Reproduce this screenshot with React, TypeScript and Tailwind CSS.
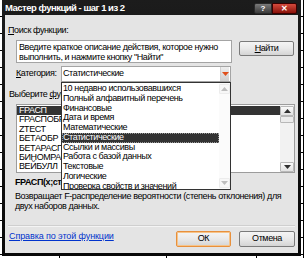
import React from 'react'

const categories = [
  '10 недавно использовавшихся',
  'Полный алфавитный перечень',
  'Финансовые',
  'Дата и время',
  'Математические',
  'Статистические',
  'Ссылки и массивы',
  'Работа с базой данных',
  'Текстовые',
  'Логические',
  'Проверка свойств и значений',
]

const functions = ['FРАСП', 'FРАСПОБР', 'ZТЕСТ', 'БЕТАОБР', 'БЕТАРАСП', 'БИНОМРАСП', 'ВЕЙБУЛЛ']

function Tri({ down, color }: { down?: boolean; color: string }) {
  return (
    <svg width="7" height="4" viewBox="0 0 7 4" className="block">
      <polygon points={down ? '0,0 7,0 3.5,4' : '0,4 7,4 3.5,0'} fill={color} />
    </svg>
  )
}

function Button({ children, focused, className }: { children: React.ReactNode; focused?: boolean; className?: string }) {
  return (
    <div
      className={
        'flex items-center justify-center rounded-[2px] border bg-linear-to-b from-[#f5f5f5] via-[#e9e9e9] to-[#d4d4d4] ' +
        (focused ? 'border-[#e8903c] shadow-[inset_0_0_0_1px_#f6c48a] ' : 'border-[#7a7a7a] ') +
        (className ?? '')
      }
    >
      {children}
    </div>
  )
}

function ScrollBtn({ down, light }: { down?: boolean; light?: boolean }) {
  return (
    <div
      className={
        'flex h-[10px] items-center justify-center rounded-[1px] border ' +
        (light ? 'border-[#ececec] bg-[#f7f7f7]' : 'border-[#b8b8b8] bg-linear-to-b from-[#fafafa] to-[#e2e2e2]')
      }
    >
      <Tri down={down} color={light ? '#bdbdbd' : '#303030'} />
    </div>
  )
}

function Sheet() {
  const cells = Array.from({ length: 64 })
  return (
    <div className="grid grid-cols-[60px_107px_90px_47px] auto-rows-[17px]">
      {cells.map((_, i) => (
        <div key={i} className="border-r border-b border-black" />
      ))}
    </div>
  )
}

export default function App() {
  return (
    <div className="relative h-[258px] w-[304px] overflow-hidden bg-white font-['Liberation_Sans',Arial,sans-serif] text-[9px] tracking-[-0.4px] text-black">
      <Sheet />

      <div className="absolute left-[2px] top-0 flex h-[256px] w-[299px] flex-col bg-linear-to-b from-[#1c1c1c] to-[#080808]">
        <div className="flex h-[15px] items-start">
          <div className="ml-[3px] mt-[2px] whitespace-nowrap text-[9.5px] font-bold leading-[12px] tracking-[-0.5px] text-white">
            Мастер функций - шаг 1 из 2
          </div>
          <div className="ml-auto mr-[4px] mt-[3px] flex">
            <div className="flex h-[11px] w-[18px] items-center justify-center rounded-l-[2px] border border-[#2a2a2a] bg-linear-to-b from-[#7a7a7a] to-[#3c3c3c] text-[8px] font-bold leading-none tracking-normal text-white">
              ?
            </div>
            <div className="flex h-[11px] w-[25px] items-center justify-center rounded-r-[2px] border border-[#3a0000] bg-linear-to-b from-[#d44a3c] to-[#8a0f08] text-[8px] font-bold leading-none tracking-normal text-white">
              ✕
            </div>
          </div>
        </div>

        <div className="relative mx-[3px] mb-[3px] flex flex-1 flex-col bg-[#e4e4e4]">
          <div className="ml-[3px] mt-[9px] leading-[12px]">
            <u>П</u>оиск функции:
          </div>

          <div className="ml-[11px] mt-[4px] flex items-start">
            <div className="h-[23px] w-[216px] whitespace-nowrap border border-[#a4a4a4] bg-white pl-[2px] pt-[1px] leading-[10px]">
              <div>Введите краткое описание действия, которое нужно</div>
              <div>выполнить, и нажмите кнопку "Найти"</div>
            </div>
            <Button className="ml-[7px] mt-[1px] h-[15px] w-[55px]">
              <span>
                <u>Н</u>айти
              </span>
            </Button>
          </div>

          <div className="ml-[11px] mt-[3px] flex h-[16px] items-center">
            <div className="w-[45px]">
              <u>К</u>атегория:
            </div>
            <div className="flex h-[16px] w-[170px] items-center border border-[#a4a4a4] bg-white">
              <div className="flex-1 pl-[1px]">Статистические</div>
              <div className="mr-px flex h-[14px] w-[9px] items-center justify-center border-l border-[#d0d0d0] bg-linear-to-b from-[#eeeeee] to-[#cfcfcf]">
                <Tri down color="#e0501c" />
              </div>
            </div>
          </div>

          <div className="ml-[4px] mt-[6px] leading-[12px]">
            Выберите <u>ф</u>ункцию:
          </div>

          <div className="ml-[11px] mt-[4px] flex h-[69px] w-[279px] border border-[#9c9c9c] bg-white">
            <div className="flex-1 pt-px">
              {functions.map((f, i) => (
                <div key={f} className={'h-[9.4px] pl-[2px] leading-[9.4px] ' + (i === 0 ? 'bg-[#333333] text-white' : '')}>
                  {f}
                </div>
              ))}
            </div>
            <div className="flex w-[14px] flex-col bg-[#f2f2f2] pt-px">
              <ScrollBtn />
              <div className="h-[7px] rounded-[1px] border border-[#b8b8b8] bg-[#ececec]" />
              <div className="flex-1" />
              <ScrollBtn down />
            </div>
          </div>

          <div className="ml-[10px] mt-[3px] whitespace-nowrap font-bold leading-[12px]">FРАСП(x;степени_свободы1;степени_свободы2)</div>
          <div className="ml-[10px] mt-[3px] whitespace-nowrap leading-[10px]">
            <div>Возвращает F-распределение вероятности (степень отклонения) для</div>
            <div>двух наборов данных.</div>
          </div>

          <div className="mx-[3px] mt-[14px] h-[2px] border-t border-b border-t-[#cfcfcf] border-b-[#f4f4f4]" />

          <div className="mt-[4px] flex items-start">
            <div className="ml-[4px] mt-[-1px] leading-[12px] tracking-[-0.1px] text-[#0033cc] underline">Справка по этой функции</div>
            <Button focused className="ml-auto h-[16px] w-[55px]">
              ОК
            </Button>
            <Button className="ml-[8px] mr-[3px] h-[16px] w-[56px]">Отмена</Button>
          </div>

          {/* open category list, lying over the function list */}
          <div className="absolute left-[56px] top-[67px] flex h-[108px] w-[170px] border border-[#333333] bg-white">
            <div className="flex-1 overflow-hidden pt-px">
              {categories.map((c, i) => (
                <div
                  key={c}
                  className={
                    'h-[9.75px] whitespace-nowrap pl-[1px] leading-[9.75px] ' +
                    (i === 5 ? 'outline-1 -outline-offset-1 outline-dotted outline-[#9a9a9a] bg-[#333333] text-white' : '')
                  }
                >
                  {c}
                </div>
              ))}
            </div>
            <div className="flex w-[11px] flex-col bg-[#fbfbfb] py-px">
              <ScrollBtn light />
              <div className="flex-1" />
              <ScrollBtn down light />
            </div>
          </div>
        </div>
      </div>
    </div>
  )
}
